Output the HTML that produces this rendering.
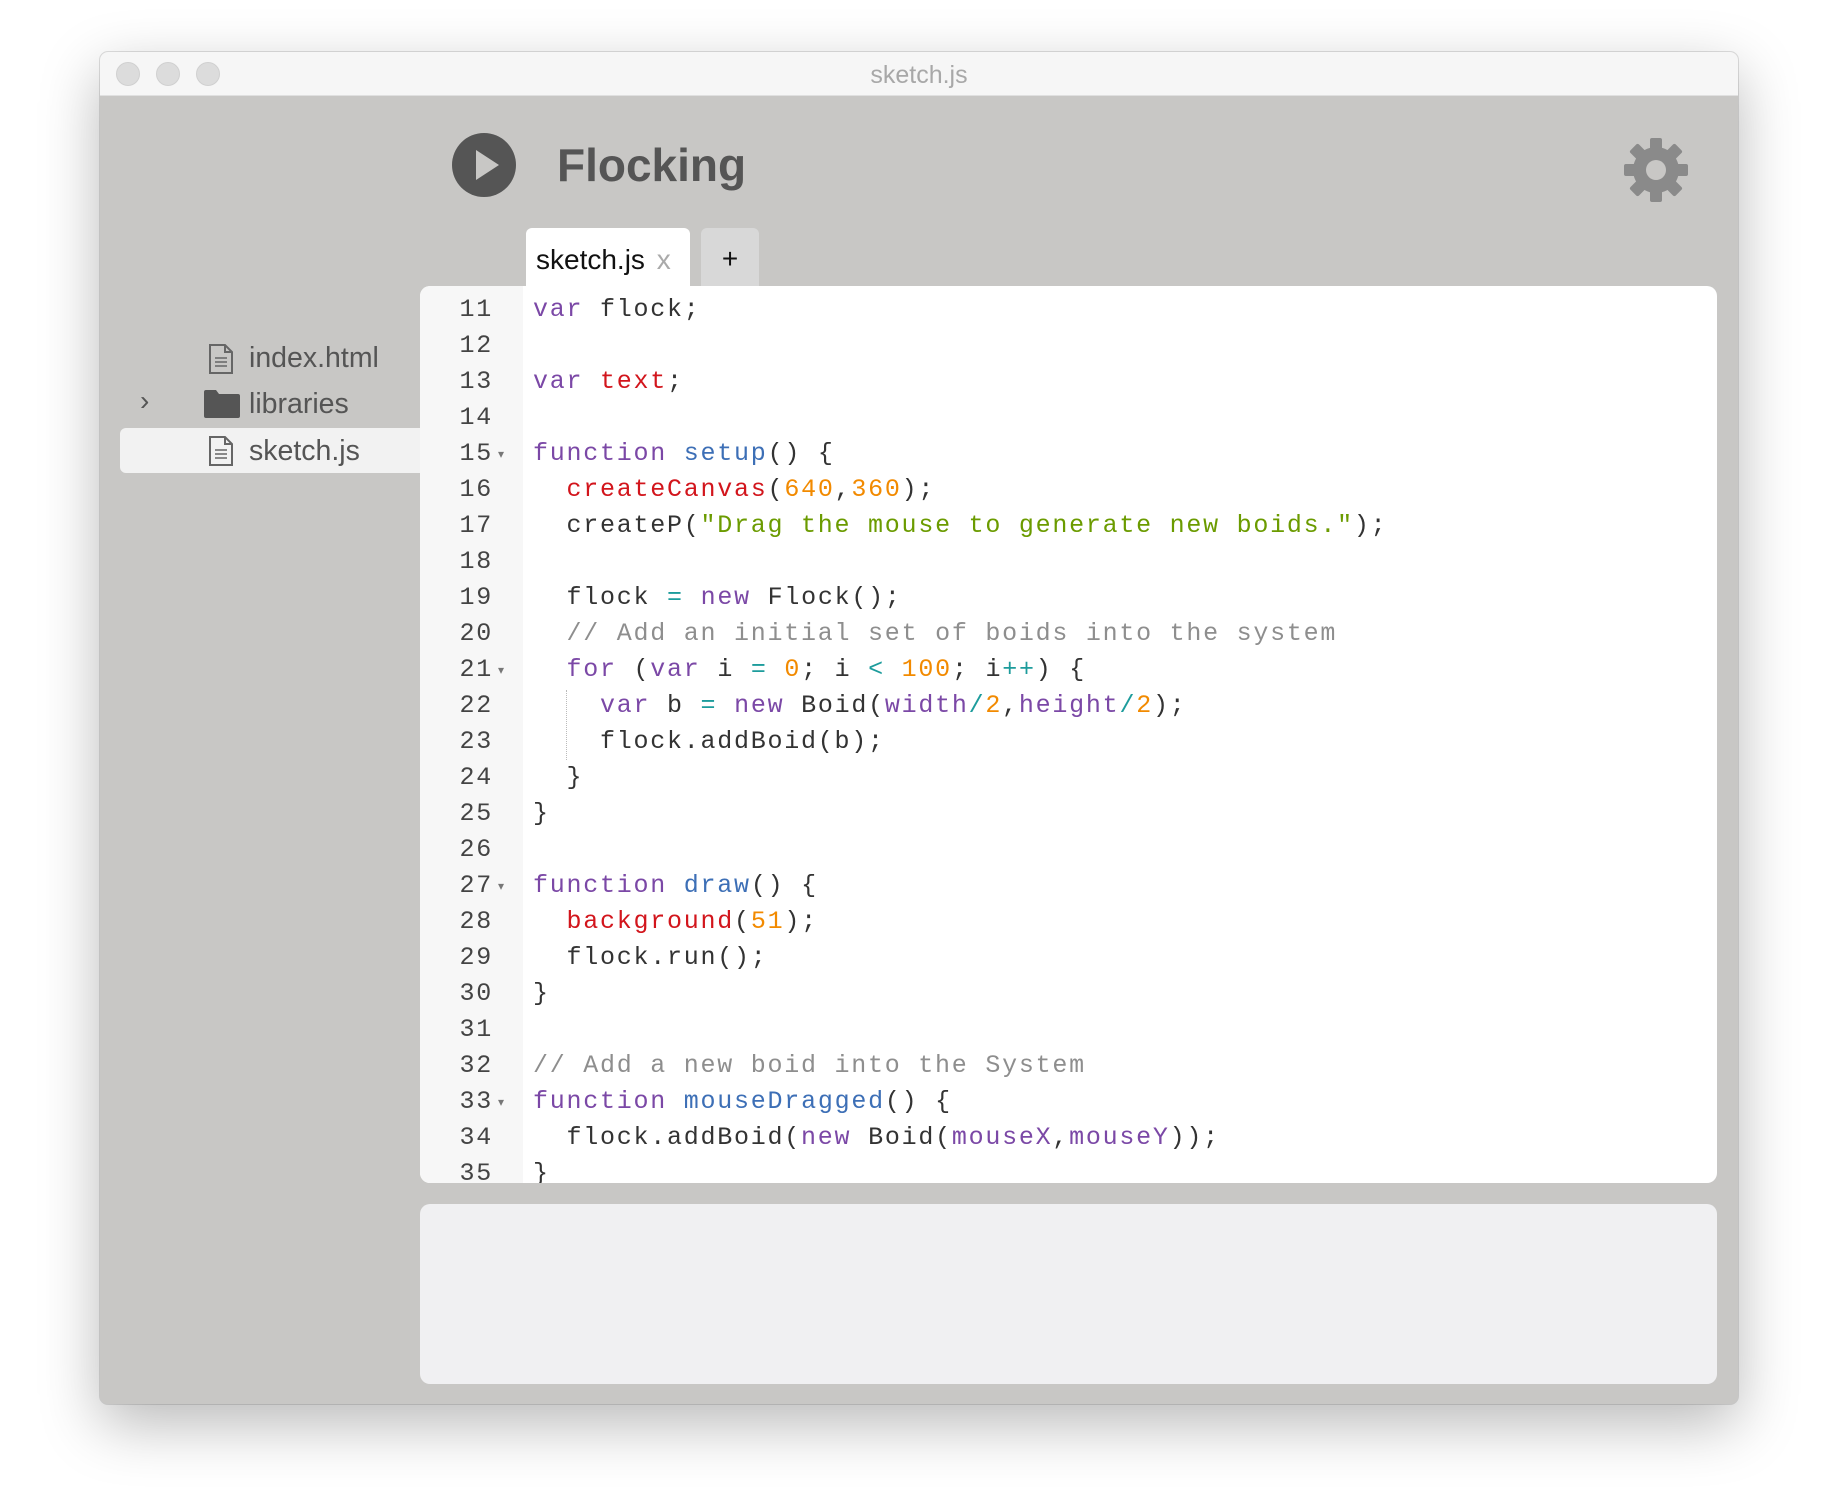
<!DOCTYPE html>
<html><head><meta charset="utf-8"><style>
*{margin:0;padding:0;box-sizing:border-box}
body{width:1836px;height:1491px;background:#fff;position:relative;overflow:hidden;font-family:"Liberation Sans",sans-serif}
.win{position:absolute;left:100px;top:52px;width:1638px;height:1352px;background:#c8c7c5;border-radius:8px;box-shadow:0 20px 60px rgba(0,0,0,.28),0 0 0 1px rgba(0,0,0,.12);overflow:hidden}
.tb{position:absolute;left:0;top:0;width:100%;height:44px;background:#f6f6f6;border-bottom:1px solid #e0e0e0}
.tl{position:absolute;top:10px;width:24px;height:24px;border-radius:50%;background:#dcdcdc;border:1px solid #d0d0d0}
.title{position:absolute;left:0;right:0;top:9px;text-align:center;font-size:25px;color:#a8a8a8}
.abs{position:absolute}
.code{font-family:"Liberation Mono",monospace;font-size:25px;letter-spacing:1.75px;line-height:36px;white-space:pre;color:#333}
.k{color:#7b48a6}.f{color:#3d6fb6}.r{color:#d2151c}.n{color:#f28a00}.s{color:#6b9b00}.c{color:#8e8e8e}.o{color:#1d9c9c}
.side{font-size:28.5px;color:#555}
</style></head><body>
<div class="win">
<div class="tb">
<div class="tl" style="left:16px"></div><div class="tl" style="left:56px"></div><div class="tl" style="left:96px"></div>
<div class="title">sketch.js</div>
</div>
<!-- play -->
<svg class="abs" style="left:351px;top:80px" width="66" height="66" viewBox="0 0 66 66"><circle cx="33" cy="33" r="32" fill="#555"/><path d="M25 18 L48 33 L25 48 Z" fill="#c8c7c5"/></svg>
<div class="abs" style="left:457px;top:86px;font-size:46px;font-weight:bold;color:#555">Flocking</div>
<!-- gear -->
<svg class="abs" style="left:1524px;top:86px" width="64" height="64" viewBox="-32 -32 64 64">
<g fill="#8a8a8a">
<circle r="23"/>
<rect x="-6" y="-32" width="12" height="14" rx="2"/>
<rect x="-6" y="-32" width="12" height="14" rx="2" transform="rotate(45)"/>
<rect x="-6" y="-32" width="12" height="14" rx="2" transform="rotate(90)"/>
<rect x="-6" y="-32" width="12" height="14" rx="2" transform="rotate(135)"/>
<rect x="-6" y="-32" width="12" height="14" rx="2" transform="rotate(180)"/>
<rect x="-6" y="-32" width="12" height="14" rx="2" transform="rotate(225)"/>
<rect x="-6" y="-32" width="12" height="14" rx="2" transform="rotate(270)"/>
<rect x="-6" y="-32" width="12" height="14" rx="2" transform="rotate(315)"/>
</g><circle r="10" fill="#c8c7c5"/></svg>
<!-- tabs -->
<div class="abs" style="left:426px;top:176px;width:164px;height:60px;background:#fff;border-radius:6px 6px 0 0"></div>
<div class="abs" style="left:436px;top:192px;font-size:28px;color:#111">sketch.js <span style="color:#aaa;margin-left:4px">x</span></div>
<div class="abs" style="left:601px;top:176px;width:58px;height:58px;background:#d8d8d8;border-radius:6px 6px 0 0;text-align:center;font-size:28px;line-height:62px;color:#111">+</div>
<!-- sidebar -->
<div class="abs" style="left:20px;top:376px;width:310px;height:45px;background:#f2f2f2;border-radius:6px 0 0 6px"></div>
<svg class="abs" style="left:108px;top:292px" width="26" height="30" viewBox="0 0 26 30"><path d="M2 1H17L24 8V29H2Z M17 1V8H24" fill="none" stroke="#666" stroke-width="2"/><path d="M7 14H19M7 18H19M7 22H19" stroke="#666" stroke-width="1.6"/></svg>
<div class="abs side" style="left:149px;top:290px">index.html</div>
<div class="abs" style="left:40px;top:333px;font-size:28px;color:#555">›</div>
<svg class="abs" style="left:104px;top:338px" width="36" height="28" viewBox="0 0 36 28"><path d="M0 2Q0 0 2 0H12L15 4H34Q36 4 36 6V26Q36 28 34 28H2Q0 28 0 26Z" fill="#555"/></svg>
<div class="abs side" style="left:149px;top:336px">libraries</div>
<svg class="abs" style="left:108px;top:384px" width="26" height="30" viewBox="0 0 26 30"><path d="M2 1H17L24 8V29H2Z M17 1V8H24" fill="none" stroke="#666" stroke-width="2"/><path d="M7 14H19M7 18H19M7 22H19" stroke="#666" stroke-width="1.6"/></svg>
<div class="abs side" style="left:149px;top:383px">sketch.js</div>
<!-- editor -->
<div class="abs" style="left:320px;top:234px;width:1297px;height:897px;background:#fff;border-radius:10px;overflow:hidden">
<div class="abs" style="left:0;top:0;width:103px;height:100%;background:#f7f7f7"></div>
<div class="abs code" style="left:0;top:6px;width:73px;text-align:right;color:#444">11
12
13
14
15
16
17
18
19
20
21
22
23
24
25
26
27
28
29
30
31
32
33
34
35</div>
<div class="abs" style="left:78px;top:6px;font-size:12px;line-height:36px;color:#777;white-space:pre">



▾





▾





▾





▾</div>
<div class="abs" style="left:146px;top:404px;height:70px;border-left:1px dotted #bbb"></div>
<div class="abs code" style="left:113px;top:6px"><span class="k">var</span> flock;

<span class="k">var</span> <span class="r">text</span>;

<span class="k">function</span> <span class="f">setup</span>() {
  <span class="r">createCanvas</span>(<span class="n">640</span>,<span class="n">360</span>);
  createP(<span class="s">"Drag the mouse to generate new boids."</span>);

  flock <span class="o">=</span> <span class="k">new</span> Flock();
  <span class="c">// Add an initial set of boids into the system</span>
  <span class="k">for</span> (<span class="k">var</span> i <span class="o">=</span> <span class="n">0</span>; i <span class="o">&lt;</span> <span class="n">100</span>; i<span class="o">++</span>) {
    <span class="k">var</span> b <span class="o">=</span> <span class="k">new</span> Boid(<span class="k">width</span><span class="o">/</span><span class="n">2</span>,<span class="k">height</span><span class="o">/</span><span class="n">2</span>);
    flock.addBoid(b);
  }
}

<span class="k">function</span> <span class="f">draw</span>() {
  <span class="r">background</span>(<span class="n">51</span>);
  flock.run();
}

<span class="c">// Add a new boid into the System</span>
<span class="k">function</span> <span class="f">mouseDragged</span>() {
  flock.addBoid(<span class="k">new</span> Boid(<span class="k">mouseX</span>,<span class="k">mouseY</span>));
}</div>
</div>
<!-- console -->
<div class="abs" style="left:320px;top:1152px;width:1297px;height:180px;background:#f0f0f2;border-radius:10px"></div>
</div>
</body></html>
